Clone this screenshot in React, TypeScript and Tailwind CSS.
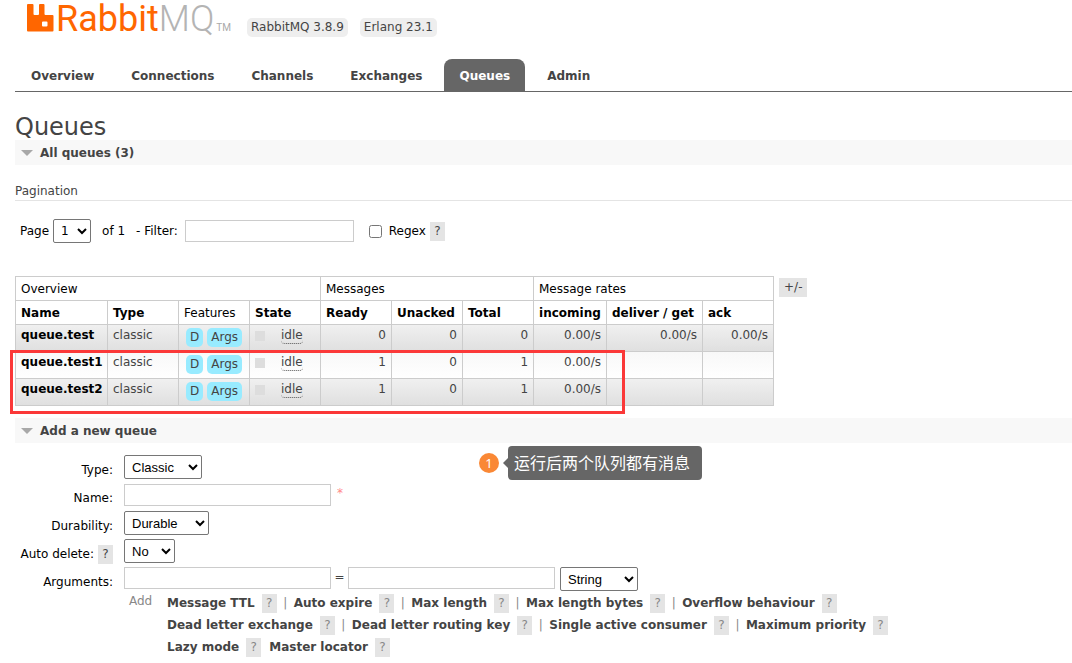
import { ReactNode } from "react";

const tabs = ["Overview", "Connections", "Channels", "Exchanges", "Queues", "Admin"];

const queues = [
  { name: "queue.test", ready: 0, unacked: 0, total: 0, incoming: "0.00/s", deliver: "0.00/s", ack: "0.00/s" },
  { name: "queue.test1", ready: 1, unacked: 0, total: 1, incoming: "0.00/s", deliver: "", ack: "" },
  { name: "queue.test2", ready: 1, unacked: 0, total: 1, incoming: "0.00/s", deliver: "", ack: "" },
];

const columns = [
  { label: "Name", width: "w-[92px]", sortable: true },
  { label: "Type", width: "w-[71px]", sortable: true },
  { label: "Features", width: "w-[71px]", sortable: false },
  { label: "State", width: "w-[71px]", sortable: true },
  { label: "Ready", width: "w-[71px]", sortable: true },
  { label: "Unacked", width: "w-[71px]", sortable: true },
  { label: "Total", width: "w-[71px]", sortable: true },
  { label: "incoming", width: "w-[73px]", sortable: true },
  { label: "deliver / get", width: "w-[96px]", sortable: true },
  { label: "ack", width: "w-[71px]", sortable: true },
];

const argumentLines = [
  ["Message TTL", "Auto expire", "Max length", "Max length bytes", "Overflow behaviour"],
  ["Dead letter exchange", "Dead letter routing key", "Single active consumer", "Maximum priority"],
  ["Lazy mode", "Master locator"],
];

const headCell = "border border-[#ccc] px-[5px]";
const cell = "border border-[#ccc] px-[5px] pb-[6px]";
const inputStyle = "h-[22px] border border-[#ccc] bg-white px-1";
const selectStyle =
  "h-6 rounded-[2px] border border-[#767676] bg-white px-[3px] font-['Liberation_Sans',sans-serif] text-[13px] text-black";

function Logo() {
  return (
    <a href="#" className="flex items-start" aria-label="RabbitMQ">
      <svg width="27" height="28" viewBox="0 0 27 28" className="mt-1">
        <path
          fill="#f60"
          fillRule="evenodd"
          d="M1 0h4.500a1 1 0 0 1 1 1v9a1 1 0 0 0 1 1h3.500a1 1 0 0 0 1-1V1a1 1 0 0 1 1-1h3.500a1 1 0 0 1 1 1v9a1 1 0 0 0 1 1H25.500a1 1 0 0 1 1 1v14.500a1 1 0 0 1-1 1H1a1 1 0 0 1-1-1V1a1 1 0 0 1 1-1zM16 17.500a1 1 0 0 0-1 1v3a1 1 0 0 0 1 1h3.500a1 1 0 0 0 1-1v-3a1 1 0 0 0-1-1z"
        />
      </svg>
      <span className="ml-[2px] font-[Roboto,sans-serif] text-[36px] leading-[38px] text-[#f60]">
        Rabbit<span className="font-light text-[#b4b4b4]">MQ</span>
      </span>
      <span className="ml-[2px] mt-[22px] font-[Roboto,sans-serif] text-[10px] leading-3 text-[#aaa]">TM</span>
    </a>
  );
}

function Version({ children }: { children: ReactNode }) {
  return <li className="rounded-[5px] bg-[#eee] px-1 leading-[19px]">{children}</li>;
}

function Help({ className = "text-[#444]" }: { className?: string }) {
  return (
    <button type="button" className={`h-[19px] w-[15px] bg-[#e4e4e4] text-center leading-[19px] ${className}`}>
      ?
    </button>
  );
}

function SectionHeader({ children }: { children: ReactNode }) {
  return (
    <h2 className="flex h-[25px] items-center bg-[#f8f8f8] pl-[6px] font-bold">
      <svg width="12" height="6" viewBox="0 0 12 6" className="mr-[7px]">
        <path d="M0 0h12L6 6z" fill="#a8a8a8" />
      </svg>
      {children}
    </h2>
  );
}

function Badge({ children }: { children: ReactNode }) {
  return <span className="rounded-[5px] bg-[#98ebff] px-1 leading-[19px]">{children}</span>;
}

function QueueTable() {
  return (
    <div className="relative flex items-start">
      <table className="w-[759px] table-fixed border-collapse">
        <colgroup>
          {columns.map((column) => (
            <col key={column.label} className={column.width} />
          ))}
        </colgroup>
        <thead className="text-left text-black">
          <tr className="h-6">
            <th colSpan={4} className={`${headCell} font-normal`}>Overview</th>
            <th colSpan={3} className={`${headCell} font-normal`}>Messages</th>
            <th colSpan={3} className={`${headCell} font-normal`}>Message rates</th>
          </tr>
          <tr className="h-6">
            {columns.map((column) => (
              <th
                key={column.label}
                className={`${headCell} whitespace-nowrap ${column.sortable ? "font-bold" : "font-normal"}`}
              >
                {column.label}
              </th>
            ))}
          </tr>
        </thead>
        <tbody>
          {queues.map((queue) => (
            <tr
              key={queue.name}
              className="h-[27px] bg-linear-to-b from-[#f8f8f8] to-white odd:from-[#f0f0f0] odd:to-[#dfdfdf]"
            >
              <td className={cell}>
                <a href="#" className="font-bold text-black">{queue.name}</a>
              </td>
              <td className={cell}>classic</td>
              <td className="border border-[#ccc] px-[7px] pb-[2px]">
                <div className="flex gap-1">
                  <Badge>D</Badge>
                  <Badge>Args</Badge>
                </div>
              </td>
              <td className="border border-[#ccc] px-[5px] pb-1">
                <div className="flex items-center">
                  <span className="mr-4 size-[10px] bg-[#ddd]" />
                  <span className="rounded-[4px] border-b border-dotted border-[#555] leading-[15px]">idle</span>
                </div>
              </td>
              <td className={`${cell} text-right`}>{queue.ready}</td>
              <td className={`${cell} text-right`}>{queue.unacked}</td>
              <td className={`${cell} text-right`}>{queue.total}</td>
              <td className={`${cell} text-right`}>{queue.incoming}</td>
              <td className={`${cell} text-right`}>{queue.deliver}</td>
              <td className={`${cell} text-right`}>{queue.ack}</td>
            </tr>
          ))}
        </tbody>
      </table>
      <button type="button" className="ml-[5px] mt-[2px] h-[19px] bg-[#e4e4e4] px-[5px] leading-[19px]">
        +/-
      </button>
      {/* Highlight around the last two queues */}
      <div className="pointer-events-none absolute -left-[5px] top-[74px] h-16 w-[615px] border-3 border-[#fb3838]" />
    </div>
  );
}

function FormRow({ label, id, help, children }: { label: string; id: string; help?: boolean; children: ReactNode }) {
  return (
    <div className="flex h-7 items-start">
      <div className="mr-[11px] mt-[6px] flex w-[98px] items-center justify-end gap-1 text-black">
        <label htmlFor={id} className="whitespace-nowrap leading-[19px]">{label}</label>
        {help && <Help />}
      </div>
      {children}
    </div>
  );
}

function ArgumentOptions() {
  return (
    <div className="-mt-1 flex pl-[114px] text-[#888]">
      <span className="w-[38px] leading-5">Add</span>
      <div className="pt-[3px]">
        {argumentLines.map((line, row) => (
          <div key={row} className="flex h-[22px] items-start whitespace-nowrap leading-[19px]">
            {line.map((name, i) => (
              <span key={name} className="flex">
                <button type="button" className="mr-[7px] font-bold text-[#444]">{name}</button>
                <Help className="text-[#888]" />
                {i < line.length - 1 && (row < 2 ? <span className="mx-[5px] w-[7px] text-center">|</span> : <span className="w-2" />)}
              </span>
            ))}
          </div>
        ))}
      </div>
    </div>
  );
}

function NewQueueForm() {
  return (
    <form className="relative pt-3" onSubmit={(e) => e.preventDefault()}>
      <FormRow label="Type:" id="type">
        <select id="type" className={`${selectStyle} w-[78px]`}>
          <option>Classic</option>
          <option>Quorum</option>
        </select>
      </FormRow>
      <FormRow label="Name:" id="name">
        <input id="name" type="text" className={`${inputStyle} mt-px w-[207px]`} />
        <span className="ml-[6px] leading-5 text-[#f88]">*</span>
      </FormRow>
      <FormRow label="Durability:" id="durability">
        <select id="durability" className={`${selectStyle} w-[85px]`}>
          <option>Durable</option>
          <option>Transient</option>
        </select>
      </FormRow>
      <FormRow label="Auto delete:" id="auto-delete" help>
        <select id="auto-delete" className={`${selectStyle} w-[51px]`}>
          <option>No</option>
          <option>Yes</option>
        </select>
      </FormRow>
      <FormRow label="Arguments:" id="arguments">
        <input id="arguments" type="text" className={`${inputStyle} w-[207px]`} />
        <span className="w-[17px] text-center leading-5">=</span>
        <input type="text" aria-label="Argument value" className={`${inputStyle} w-[207px]`} />
        <select aria-label="Argument type" className={`${selectStyle} ml-[5px] w-[78px]`}>
          <option>String</option>
          <option>Number</option>
          <option>Boolean</option>
          <option>List</option>
        </select>
      </FormRow>
      <ArgumentOptions />

      {/* Callout */}
      <div className="absolute left-[464px] top-[3px] flex items-center font-['Noto_Sans','Noto_Sans_CJK_SC',sans-serif] text-white">
        <span className="size-5 rounded-full bg-[#fa8835] text-center text-[13px] leading-5">1</span>
        <svg width="5" height="10" viewBox="0 0 5 10" className="ml-1">
          <path d="M5 0v10L0 5z" fill="#666" />
        </svg>
        <span className="h-[34px] rounded-[4px] bg-[#666] pl-[6px] pr-3 text-[16px] leading-[34px]">
          运行后两个队列都有消息
        </span>
      </div>
    </form>
  );
}

export default function App() {
  return (
    <div className="min-h-screen bg-white pl-[15px] font-['DejaVu_Sans',Verdana,sans-serif] text-[12px] leading-4 text-[#444]">
      <header>
        <div className="flex h-[59px] items-start pl-3">
          <Logo />
          <ul className="ml-4 mt-[18px] flex gap-3">
            <Version>RabbitMQ 3.8.9</Version>
            <Version>Erlang 23.1</Version>
          </ul>
        </div>
        <nav className="flex gap-[7px] border-b border-[#666] pl-px">
          {tabs.map((tab) => (
            <a
              key={tab}
              href="#"
              className={`rounded-t-lg px-[15px] pb-[7px] pt-[9px] font-bold ${tab === "Queues" ? "bg-[#666] text-white" : ""}`}
            >
              {tab}
            </a>
          ))}
        </nav>
      </header>

      <main>
        <h1 className="mt-[22px] text-[24px] leading-[26px]">Queues</h1>
        <SectionHeader>All queues (3)</SectionHeader>

        <h3 className="mt-[18px] border-b border-[#e4e4e4] pb-px">Pagination</h3>
        <div className="mt-[18px] flex h-6 items-center pl-[5px] text-black">
          <label htmlFor="page">Page</label>
          <select id="page" className="ml-1 h-6 w-[38px] rounded-[2px] border border-[#767676] bg-white px-[3px]">
            <option>1</option>
          </select>
          <span className="ml-[11px]">of 1</span>
          <label htmlFor="filter" className="ml-[11px] mr-[7px]">- Filter:</label>
          <input id="filter" type="text" className={`${inputStyle} w-[169px]`} />
          <input id="regex" type="checkbox" className="ml-[15px] mr-[7px] size-[13px]" />
          <label htmlFor="regex" className="mr-1">Regex</label>
          <Help />
        </div>

        <div className="mb-3 mt-[33px]">
          <QueueTable />
        </div>

        <SectionHeader>Add a new queue</SectionHeader>
        <NewQueueForm />
      </main>
    </div>
  );
}
